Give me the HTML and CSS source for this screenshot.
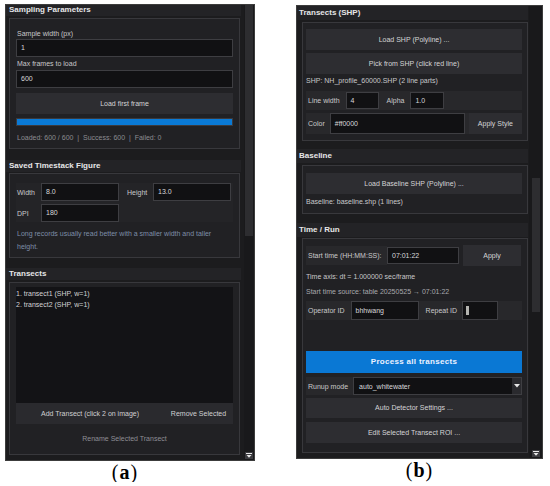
FILE: index.html
```html
<!DOCTYPE html>
<html>
<head>
<meta charset="utf-8">
<link rel="stylesheet" href="styles.css">
</head>
<body>
<div class="figure">
  <div class="col col-a">
    <div class="panel panel-a">
      <div class="content content-a">
        <div class="hdr hdr-a1">Sampling Parameters</div>
        <div class="box box-sp">
          <div class="lbl lbl-first">Sample width (px)</div>
          <div class="inp">1</div>
          <div class="lbl lbl-second">Max frames to load</div>
          <div class="inp">600</div>
          <div class="btn btn-load">Load first frame</div>
          <div class="progress"></div>
          <div class="status">Loaded: 600 / 600 &nbsp;|&nbsp; Success: 600 &nbsp;|&nbsp; Failed: 0</div>
        </div>
        <div class="hdr hdr-a2">Saved Timestack Figure</div>
        <div class="box box-ts">
          <div class="grid-ts">
            <span class="glbl">Width</span>
            <div class="inp inp-sm">8.0</div>
            <span class="glbl glbl-h">Height</span>
            <div class="inp inp-sm">13.0</div>
            <span class="glbl">DPI</span>
            <div class="inp inp-sm">180</div>
          </div>
          <div class="hint">Long records usually read better with a smaller width and taller height.</div>
        </div>
        <div class="hdr hdr-a3">Transects</div>
        <div class="box box-tr">
          <div class="list">
            <div class="item">1. transect1 (SHP, w=1)</div>
            <div class="item">2. transect2 (SHP, w=1)</div>
          </div>
          <div class="list-btns">
            <span class="lb-add">Add Transect (click 2 on image)</span>
            <span class="lb-rem">Remove Selected</span>
          </div>
          <div class="rename">Rename Selected Transect</div>
        </div>
      </div>
      <div class="sb sb-a">
        <div class="handle handle-a"></div>
        <div class="arrow">
          <svg width="6" height="5" viewBox="0 0 6 5"><rect x="0" y="0" width="6" height="1" fill="#e8e8e8"/><polygon points="0.5,2 5.5,2 3,4.8" fill="#e8e8e8"/></svg>
        </div>
      </div>
    </div>
    <div class="caption caption-a">(<b>a</b>)</div>
  </div>

  <div class="col col-b">
    <div class="panel panel-b">
      <div class="content content-b">
        <div class="hdr hdr-b1">Transects (SHP)</div>
        <div class="box box-shp">
          <div class="btn btn-b1">Load SHP (Polyline) ...</div>
          <div class="btn btn-b2">Pick from SHP (click red line)</div>
          <div class="info info-shp">SHP: NH_profile_60000.SHP (2 line parts)</div>
          <div class="row row-lw">
            <span class="rlbl">Line width</span>
            <div class="inp inp-lw">4</div>
            <span class="rlbl rlbl-alpha">Alpha</span>
            <div class="inp inp-alpha">1.0</div>
          </div>
          <div class="row row-color">
            <span class="rlbl">Color</span>
            <div class="inp inp-color">#ff0000</div>
            <div class="btn btn-apply">Apply Style</div>
          </div>
        </div>
        <div class="hdr hdr-b2">Baseline</div>
        <div class="box box-base">
          <div class="btn btn-base">Load Baseline SHP (Polyline) ...</div>
          <div class="info info-base">Baseline: baseline.shp (1 lines)</div>
        </div>
        <div class="hdr hdr-b3">Time / Run</div>
        <div class="box box-run">
          <div class="row row-start">
            <span class="rlbl rlbl-start">Start time (HH:MM:SS):</span>
            <div class="inp inp-start">07:01:22</div>
            <div class="btn btn-applyt">Apply</div>
          </div>
          <div class="info info-axis">Time axis: dt = 1.000000 sec/frame</div>
          <div class="info info-src">Start time source: table 20250525 → 07:01:22</div>
          <div class="row row-op">
            <span class="rlbl">Operator ID</span>
            <div class="inp inp-op">bhhwang</div>
            <span class="rlbl rlbl-rep">Repeat ID</span>
            <div class="inp inp-rep"><span class="caret"></span></div>
          </div>
          <div class="btn btn-process">Process all transects</div>
          <div class="row row-runup">
            <span class="rlbl">Runup mode</span>
            <div class="combo">
              <span class="combo-text">auto_whitewater</span>
              <span class="combo-arrow"><svg width="6" height="4" viewBox="0 0 6 4"><polygon points="0,0 6,0 3,3.6" fill="#e6e6e6"/></svg></span>
            </div>
          </div>
          <div class="btn btn-auto">Auto Detector Settings ...</div>
          <div class="btn btn-roi">Edit Selected Transect ROI ...</div>
        </div>
      </div>
      <div class="sb sb-b">
        <div class="sb-top"></div>
        <div class="handle handle-b"></div>
        <div class="arrow">
          <svg width="6" height="5" viewBox="0 0 6 5"><rect x="0" y="0" width="6" height="1" fill="#e8e8e8"/><polygon points="0.5,2 5.5,2 3,4.8" fill="#e8e8e8"/></svg>
        </div>
      </div>
    </div>
    <div class="caption caption-b">(<b>b</b>)</div>
  </div>
</div>
</body>
</html>
```

FILE: styles.css
```css
* { box-sizing: border-box; }
html, body { margin: 0; padding: 0; background: #ffffff; }
body {
  font-family: "Liberation Sans", Arial, sans-serif;
  font-size: 7px;
  color: #d2d2d4;
}
.figure {
  display: flex;
  align-items: flex-start;
  padding: 4px 0 0 5px;
  gap: 41px;
}
.col { display: flex; flex-direction: column; }
.col-a { width: 250px; }
.col-b { width: 247px; margin-top: 1px; }

.panel {
  display: flex;
  background: #1c1c1e;
  border: 1px solid #3c3c3c;
}
.panel-a { height: 457px; }
.panel-b { height: 454px; }

.content { flex: 1; display: flex; flex-direction: column; }
.content-a { padding: 0 3px 0 0; }
.content-b { padding: 0 0 0 0; }

.hdr {
  font-weight: bold;
  font-size: 8px;
  color: #e6e6e8;
  background: #232326;
  line-height: 12px;
  height: 12px;
  padding-left: 3px;
  white-space: nowrap;
}
.hdr-a1 { height: 11px; line-height: 10px; }
.hdr-a2 { margin-top: 11px; }
.hdr-a3 { margin-top: 10px; }

.box {
  background: #212124;
  border: 1px solid #38383c;
  display: flex;
  flex-direction: column;
}
.content-a .box { margin-left: 3px; margin-right: 1px; }

.box-sp { margin-top: 2px; padding: 9px 6px 5px 6px; }
.lbl { line-height: 11px; height: 11px; color: #c8c8ca; padding-left: 1px; }
.lbl-second { margin-top: 1px; height: 12px; line-height: 12px; }
.inp {
  background: #111113;
  border: 1px solid #3e3e42;
  height: 18px;
  line-height: 16px;
  padding-left: 4px;
  color: #d8d8da;
  white-space: nowrap;
  overflow: hidden;
}
.btn {
  background: #2d2d31;
  color: #d4d4d6;
  text-align: center;
  white-space: nowrap;
}
.btn-load { margin-top: 5px; height: 21px; line-height: 21px; }
.progress { margin-top: 4px; height: 8px; background: #0a7ad6; border: 1px solid #3a3a3e; }
.status { margin-top: 6px; line-height: 11px; color: #8c8c90; padding-left: 1px; white-space: nowrap; }

.box-ts { margin-top: 1px; padding: 9px 6px 4px 6px; }
.grid-ts {
  display: grid;
  grid-template-columns: 25px 78px 7px 27px 78px;
  grid-template-rows: 18px 18px;
  row-gap: 3px;
  align-items: center;
  background: #242427;
}
.grid-ts .glbl { padding-left: 1px; color: #c8c8ca; }
.grid-ts .glbl-h { grid-column: 4; }
.grid-ts .inp:nth-of-type(1) { grid-column: 2; }
.grid-ts .inp { height: 18px; }
.grid-ts .glbl:nth-of-type(3) { grid-column: 1; grid-row: 2; }
.grid-ts .inp:nth-of-type(3) { grid-column: 2; grid-row: 2; }
.glbl:first-child { grid-column: 1; grid-row: 1; }
.hint { margin-top: 5px; line-height: 13px; color: #7e8ea8; padding-left: 1px; padding-right: 14px; }

.box-tr { margin-top: 2px; padding: 4px 6px 5px 6px; }
.list { height: 116px; background: #131316; padding: 1px 0 0 0; }
.item { line-height: 11px; color: #d2d2d4; padding-left: 0; }
.list-btns {
  height: 21px;
  background: #2a2a2e;
  display: flex;
  align-items: center;
  color: #d0d0d2;
}
.lb-add { width: 148px; text-align: center; }
.lb-rem { flex: 1; text-align: center; }
.rename { margin-top: 5px; height: 20px; line-height: 20px; text-align: center; color: #8e8e94; }

.sb {
  background: #19191b;
  display: flex;
  flex-direction: column;
  align-items: center;
}
.sb-a { width: 10px; }
.sb-b { width: 13px; }
.handle { width: 8px; background: #2d2d30; }
.handle-a { height: 231px; }
.sb-top { height: 172px; }
.handle-b { height: 134px; }
.arrow {
  margin-top: auto;
  margin-bottom: 1px;
  width: 8px;
  height: 7px;
  background: #3a3a3e;
  display: flex;
  align-items: center;
  justify-content: center;
}
.arrow svg { display: block; }

/* right panel */
.content-b .hdr { height: 14px; line-height: 14px; padding-left: 2px; margin-right: 1px; }
.hdr-b2 { margin-top: 8px; }
.hdr-b3 { margin-top: 9px; }
.content-b .box { margin-left: 5px; margin-right: 1px; padding: 0 5px 0 3px; }
.box-shp { margin-top: 2px; padding-top: 6px !important; padding-bottom: 6px !important; }
.btn-b1 { height: 21px; line-height: 21px; }
.btn-b2 { margin-top: 3px; height: 21px; line-height: 21px; }
.info { line-height: 10px; height: 10px; white-space: nowrap; color: #c8c8ca; padding-left: 0; }
.info-shp { margin-top: 2px; }
.row {
  display: flex;
  align-items: center;
  background: #28282b;
}
.rlbl { padding-left: 2px; white-space: nowrap; color: #c8c8ca; }
.row-lw { margin-top: 5px; height: 19px; }
.inp-lw { margin-left: 6px; width: 33px; height: 17px; line-height: 15px; }
.rlbl-alpha { margin-left: 6px; }
.inp-alpha { margin-left: 6px; width: 34px; height: 17px; line-height: 15px; }
.row-color { margin-top: 3px; height: 21px; }
.inp-color { margin-left: 5px; width: 135px; height: 21px; line-height: 19px; }
.btn-apply { margin-left: 4px; flex: 1; height: 21px; line-height: 21px; }

.box-base { margin-top: 2px; padding-top: 7px !important; padding-bottom: 6px !important; }
.btn-base { height: 21px; line-height: 21px; }
.info-base { margin-top: 3px; }

.box-run { margin-top: 1px; padding-top: 7px !important; padding-bottom: 9px !important; }
.row-start { height: 19px; background: transparent; }
.rlbl-start { background: #28282b; height: 19px; line-height: 19px; width: 81px; }
.inp-start { width: 72px; height: 17px; line-height: 15px; margin-left: 0; }
.btn-applyt { margin-left: 4px; width: 58px; height: 21px; line-height: 21px; }
.info-axis { margin-top: 7px; }
.info-src { margin-top: 5px; color: #a8a8ac; }
.row-op { margin-top: 4px; height: 19px; }
.inp-op { margin-left: 6px; width: 68px; height: 19px; line-height: 17px; }
.rlbl-rep { margin-left: 5px; }
.inp-rep { margin-left: 5px; width: 36px; height: 19px; position: relative; }
.caret {
  position: absolute;
  left: 3px;
  top: 4px;
  width: 3px;
  height: 9px;
  background: #b4b4b0;
}
.btn-process {
  margin-top: 31px;
  height: 22px;
  line-height: 22px;
  background: #0a78d4;
  color: #eaf2ff;
  font-weight: bold;
  font-size: 8px;
  letter-spacing: 0.3px;
}
.row-runup { margin-top: 4px; height: 18px; }
.combo {
  margin-left: 5px;
  flex: 1;
  height: 18px;
  background: #111113;
  border: 1px solid #3e3e42;
  display: flex;
  align-items: center;
}
.combo-text { flex: 1; padding-left: 5px; color: #d8d8da; }
.combo-arrow {
  width: 9px;
  height: 16px;
  background: #2a2a2e;
  display: flex;
  align-items: center;
  justify-content: center;
}
.combo-arrow svg { display: block; }
.btn-auto { margin-top: 3px; height: 20px; line-height: 20px; }
.btn-roi { margin-top: 4px; height: 21px; line-height: 21px; }

.caption {
  font-family: "Liberation Serif", "Times New Roman", serif;
  font-size: 20px;
  color: #000;
  line-height: 20px;
  margin-top: 1px;
  text-align: center;
  letter-spacing: 1px;
}
.caption-a { padding-right: 10px; }
.caption b { font-weight: bold; }
```
